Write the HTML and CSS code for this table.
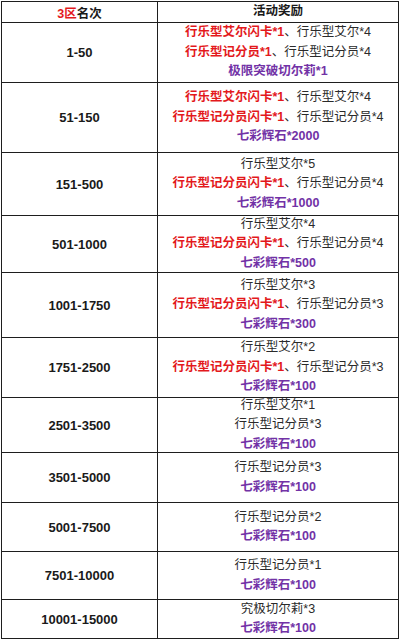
FILE: index.html
```html
<!DOCTYPE html>
<html lang="zh-CN">
<head>
<meta charset="utf-8">
<title>3区名次 活动奖励</title>
<link rel="stylesheet" href="styles.css">
</head>
<body>
<div class="table">
  <div class="row h21 head">
    <div class="rank"><p><span class="red">3区</span>名次</p></div>
    <div class="reward"><p>活动奖励</p></div>
  </div>
  <div class="row h60">
    <div class="rank"><p>1-50</p></div>
    <div class="reward">
      <p><b class="red">行乐型艾尔闪卡*1</b>、行乐型艾尔*4</p>
      <p><b class="red">行乐型记分员*1</b>、行乐型记分员*4</p>
      <p><b class="purple">极限突破切尔莉*1</b></p>
    </div>
  </div>
  <div class="row h70">
    <div class="rank"><p>51-150</p></div>
    <div class="reward">
      <p><b class="red">行乐型艾尔闪卡*1</b>、行乐型艾尔*4</p>
      <p><b class="red">行乐型记分员闪卡*1</b>、行乐型记分员*4</p>
      <p><b class="purple">七彩辉石*2000</b></p>
    </div>
  </div>
  <div class="row h63">
    <div class="rank"><p>151-500</p></div>
    <div class="reward">
      <p>行乐型艾尔*5</p>
      <p><b class="red">行乐型记分员闪卡*1</b>、行乐型记分员*4</p>
      <p><b class="purple">七彩辉石*1000</b></p>
    </div>
  </div>
  <div class="row h57">
    <div class="rank"><p>501-1000</p></div>
    <div class="reward">
      <p>行乐型艾尔*4</p>
      <p><b class="red">行乐型记分员闪卡*1</b>、行乐型记分员*4</p>
      <p><b class="purple">七彩辉石*500</b></p>
    </div>
  </div>
  <div class="row h65">
    <div class="rank"><p>1001-1750</p></div>
    <div class="reward">
      <p>行乐型艾尔*3</p>
      <p><b class="red">行乐型记分员闪卡*1</b>、行乐型记分员*3</p>
      <p><b class="purple">七彩辉石*300</b></p>
    </div>
  </div>
  <div class="row h60">
    <div class="rank"><p>1751-2500</p></div>
    <div class="reward">
      <p>行乐型艾尔*2</p>
      <p><b class="red">行乐型记分员闪卡*1</b>、行乐型记分员*3</p>
      <p><b class="purple">七彩辉石*100</b></p>
    </div>
  </div>
  <div class="row h55">
    <div class="rank"><p>2501-3500</p></div>
    <div class="reward">
      <p>行乐型艾尔*1</p>
      <p>行乐型记分员*3</p>
      <p><b class="purple">七彩辉石*100</b></p>
    </div>
  </div>
  <div class="row h50">
    <div class="rank"><p>3501-5000</p></div>
    <div class="reward">
      <p>行乐型记分员*3</p>
      <p><b class="purple">七彩辉石*100</b></p>
    </div>
  </div>
  <div class="row h49">
    <div class="rank"><p>5001-7500</p></div>
    <div class="reward">
      <p>行乐型记分员*2</p>
      <p><b class="purple">七彩辉石*100</b></p>
    </div>
  </div>
  <div class="row h48">
    <div class="rank"><p>7501-10000</p></div>
    <div class="reward">
      <p>行乐型记分员*1</p>
      <p><b class="purple">七彩辉石*100</b></p>
    </div>
  </div>
  <div class="row h39">
    <div class="rank"><p>10001-15000</p></div>
    <div class="reward">
      <p>究极切尔莉*3</p>
      <p><b class="purple">七彩辉石*100</b></p>
    </div>
  </div>
</div>
</body>
</html>
```

FILE: styles.css
```css
html, body {
  margin: 0;
  padding: 0;
  background: #ffffff;
}

body {
  font-family: "Liberation Sans", "Noto Sans CJK SC", sans-serif;
  font-size: 12.5px;
  color: #2a2a2a;
}

.table {
  margin: 1px 0 0 1px;
  width: 398px;
  box-sizing: border-box;
  border-top: 1px solid #1e1e1e;
  border-left: 1px solid #1e1e1e;
}

.row {
  display: flex;
  box-sizing: border-box;
}

.rank,
.reward {
  flex: none;
  min-width: 0;
  box-sizing: border-box;
  border-right: 1px solid #1e1e1e;
  border-bottom: 1px solid #1e1e1e;
  display: flex;
  flex-direction: column;
  align-items: center;
  justify-content: center;
  text-align: center;
}

.rank p,
.reward p {
  margin: 0;
  white-space: nowrap;
}

.rank {
  width: 156px;
  font-weight: bold;
  font-size: 13px;
  color: #1a1a1a;
}

.reward {
  width: 241px;
  line-height: 19.5px;
}

.head .reward {
  font-weight: bold;
  color: #1a1a1a;
}

.head .rank {
  font-size: 12.5px;
}

.red {
  color: #e3191c;
  font-weight: bold;
}

.purple {
  color: #7232a6;
  font-weight: bold;
}

.h21 { height: 21px; }
.h39 { height: 39px; }
.h48 { height: 48px; }
.h49 { height: 49px; }
.h50 { height: 50px; }
.h55 { height: 55px; }
.h57 { height: 57px; }
.h60 { height: 60px; }
.h63 { height: 63px; }
.h65 { height: 65px; }
.h70 { height: 70px; }
```
